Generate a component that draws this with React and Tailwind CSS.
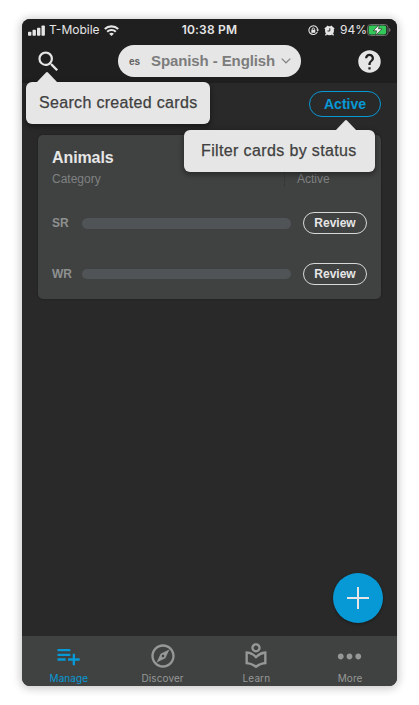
import { MdSearch, MdPlaylistAdd, MdOutlineExplore, MdOutlineLocalLibrary, MdMoreHoriz, MdHelp } from "react-icons/md";

function StatusBar() {
  return (
    <div className="grid h-[21px] grid-cols-[1fr_auto_1fr] items-center pt-px pr-[6px] pl-[6px] font-[Inter,sans-serif] text-[12px] leading-none text-[#e6e6e6]">
      <div className="flex items-center">
        <svg width="17" height="11" viewBox="0 0 17 11" fill="currentColor">
          <rect x="0" y="6.7" width="3.4" height="4" rx="0.8" />
          <rect x="4.5" y="4.7" width="3.4" height="6" rx="0.8" />
          <rect x="9" y="2.7" width="3.4" height="8" rx="0.8" />
          <rect x="13.5" y="0.5" width="3.4" height="10.2" rx="0.8" />
        </svg>
        <span className="ml-[4px] w-[50px] whitespace-nowrap text-[12px]">T-Mobile</span>
        <svg className="ml-[5px]" width="15" height="11" viewBox="0 0 15 11" fill="none" stroke="currentColor" strokeWidth="2.1">
          <path d="M0.8 4.1a9.6 9.6 0 0 1 13.4 0" />
          <path d="M3.2 6.8a6.2 6.2 0 0 1 8.6 0" />
          <path d="M5.1 8.8a3.6 3.6 0 0 1 4.8 0L7.5 11z" fill="currentColor" stroke="none" />
        </svg>
      </div>
      <span className="text-[12px] font-semibold tracking-[0.2px]">10:38 PM</span>
      <div className="flex items-center justify-end">
        <svg width="11" height="11" viewBox="0 0 11 11" fill="none" stroke="currentColor">
          <path d="M9.3 7A4.4 4.4 0 1 1 9.7 4.8" strokeWidth="1.1" />
          <path d="M8.3 4.6h2.7L9.7 6.8z" fill="currentColor" stroke="none" />
          <rect x="3.3" y="4.9" width="4" height="2.9" fill="currentColor" stroke="none" />
          <path d="M4.2 5V4a1.1 1.1 0 0 1 2.2 0v1" strokeWidth="0.9" />
        </svg>
        <svg className="ml-[5px]" width="11" height="11" viewBox="0 0 11 11" fill="currentColor">
          <circle cx="5.5" cy="5.7" r="4.5" />
          <path d="M0.4 3.5 3.7.4l1.2 1L1.4 4.8zM10.6 3.5 7.3.4l-1.2 1 3.5 3.4zM2 8.3l1.2 1-1.2 1.5-1-.9zM9 8.3l-1.2 1L9 10.8l1-.9z" />
          <path d="M5.8 3.2V6H3.5" fill="none" stroke="#1f1f1f" strokeWidth="0.9" />
        </svg>
        <span className="ml-[5px] w-[25px] whitespace-nowrap text-[12px]">94%</span>
        <svg className="ml-[2px]" width="24" height="12" viewBox="0 0 24 12">
          <rect x="0.5" y="0.5" width="20.5" height="11" rx="3.2" fill="none" stroke="#6e6e6e" />
          <rect x="1.6" y="1.6" width="17.6" height="8.8" rx="2" fill="#34c759" />
          <path d="M22 4q1.6.6 1.6 2T22 8z" fill="#6e6e6e" />
          <path d="M12.2.7 6.2 6.8h3.4l-1 4.6 6.4-6.6h-3.5z" fill="#f0f0f0" stroke="#1f1f1f" strokeWidth="0.6" />
        </svg>
      </div>
    </div>
  );
}

function Caret({ className }) {
  return (
    <svg className={"absolute -top-[10px] " + className} width="22" height="11" viewBox="0 0 22 11" fill="#e6e6e6">
      <path d="M0 11 9.8.7q1.2-1.2 2.4 0L22 11z" />
    </svg>
  );
}

function ReviewRow({ label }) {
  return (
    <div className="flex h-[50.5px] items-center">
      <span className="w-[30px] text-[12px] font-bold text-[#8e9090]">{label}</span>
      <div className="h-[10.5px] w-[209px] rounded-full bg-[#505457]" />
      <button className="ml-3 h-[22px] w-16 rounded-full border-[1.5px] border-[#d8d8d8] text-[12px] leading-none font-bold text-[#e6e6e6]">
        Review
      </button>
    </div>
  );
}

function Tab({ icon, label, active }) {
  return (
    <div className={"flex flex-1 flex-col items-center " + (active ? "text-[#0799d5]" : "text-[#969898]")}>
      <div className="mt-[6px] flex h-[28px] items-center">{icon}</div>
      <span className="mt-[2px] font-[Inter,sans-serif] text-[10px] leading-[13px] tracking-[0.1px]">{label}</span>
    </div>
  );
}

export default function App() {
  return (
    <div className="h-[705px] w-[419px] overflow-hidden bg-white pt-[19px] pl-[22px] font-['Liberation_Sans',Arial,sans-serif]">
      <div className="relative flex h-[667px] w-[375px] flex-col rounded-[8px] bg-[#292929] shadow-[0_1px_8px_2px_rgba(0,0,0,0.2)]">
        <header className="h-16 rounded-t-[8px] bg-[#1f1f1f]">
          <StatusBar />
          <div className="flex h-[43px] items-center pr-[14px] pb-[1px] pl-3">
            <MdSearch className="ml-px size-[27px] text-[#e6e6e6]" />
            <div className="ml-[56px] flex h-8 w-[183px] items-center rounded-full bg-[#e6e6e6] pl-[11px] font-bold text-[#7c7c7c]">
              <span className="w-[22px] text-[10px] text-[#606060]">es</span>
              <span className="w-[124px] whitespace-nowrap text-[15px] tracking-[-0.1px]">Spanish - English</span>
              <svg className="ml-[6px]" width="10" height="6" viewBox="0 0 10 6" fill="none" stroke="#858585" strokeWidth="1.2">
                <path d="m.7.6 4.3 4.2L9.3.6" />
              </svg>
            </div>
            <MdHelp className="ml-auto size-[27px] text-[#e6e6e6]" />
          </div>
        </header>

        <main className="flex-1 px-4">
          <div className="flex justify-end pt-2">
            <button className="h-[26px] w-[72px] rounded-full border-[1.5px] border-[#0799d5] text-[14px] leading-none font-bold text-[#0799d5]">
              Active
            </button>
          </div>
          <section className="mt-[18px] h-[164px] rounded-[5px] bg-[#404241] px-[14px] shadow-[0_0_1px_1px_rgba(0,0,0,0.12)]">
            <div className="flex h-[63px] flex-col pt-[13px]">
              <h2 className="text-[16px] leading-5 font-bold tracking-[-0.1px] text-[#e6e6e6]">Animals</h2>
              <div className="mt-[3px] flex items-center text-[12px] leading-4 text-[#7f8181]">
                <span className="w-[232px]">Category</span>
                <span className="h-4 w-[13px] border-l border-dotted border-[#303231]" />
                <span>Active</span>
              </div>
            </div>
            <ReviewRow label="SR" />
            <ReviewRow label="WR" />
          </section>
        </main>

        <nav className="flex h-[50px] rounded-b-[8px] bg-[#404241]">
          <Tab active label="Manage" icon={<MdPlaylistAdd className="mr-[2px] mb-px size-[28px]" />} />
          <Tab label="Discover" icon={<MdOutlineExplore className="size-[28px]" />} />
          <Tab label="Learn" icon={<MdOutlineLocalLibrary className="size-[28px]" />} />
          <Tab label="More" icon={<MdMoreHoriz className="mr-px size-[35px]" />} />
        </nav>

        <div className="absolute top-[63px] left-1 flex h-[42px] w-[184px] items-center rounded-[6px] bg-[#e6e6e6] pl-[13px] text-[16px] tracking-[0.32px] whitespace-nowrap text-[#404040] shadow-[0_2px_5px_1px_rgba(0,0,0,0.35)] [-webkit-text-stroke:0.25px_#404040]">
          <Caret className="left-[10px]" />
          Search created cards
        </div>
        <div className="absolute top-[111px] left-[162px] flex h-[42px] w-[191px] items-center rounded-[6px] bg-[#e6e6e6] pl-[17px] text-[16px] tracking-[0.37px] whitespace-nowrap text-[#404040] shadow-[0_2px_5px_1px_rgba(0,0,0,0.35)] [-webkit-text-stroke:0.25px_#404040]">
          <Caret className="left-[151px]" />
          Filter cards by status
        </div>
        <button aria-label="Add card" className="absolute top-[554px] left-[311px] flex size-[50px] items-center justify-center rounded-full bg-[#0799d5] shadow-[0_1px_3px_rgba(0,0,0,0.4)]">
          <svg width="22" height="22" viewBox="0 0 22 22" stroke="#e6e6e6" strokeWidth="2">
            <path d="M11 0v22M0 11h22" />
          </svg>
        </button>
      </div>
    </div>
  );
}
